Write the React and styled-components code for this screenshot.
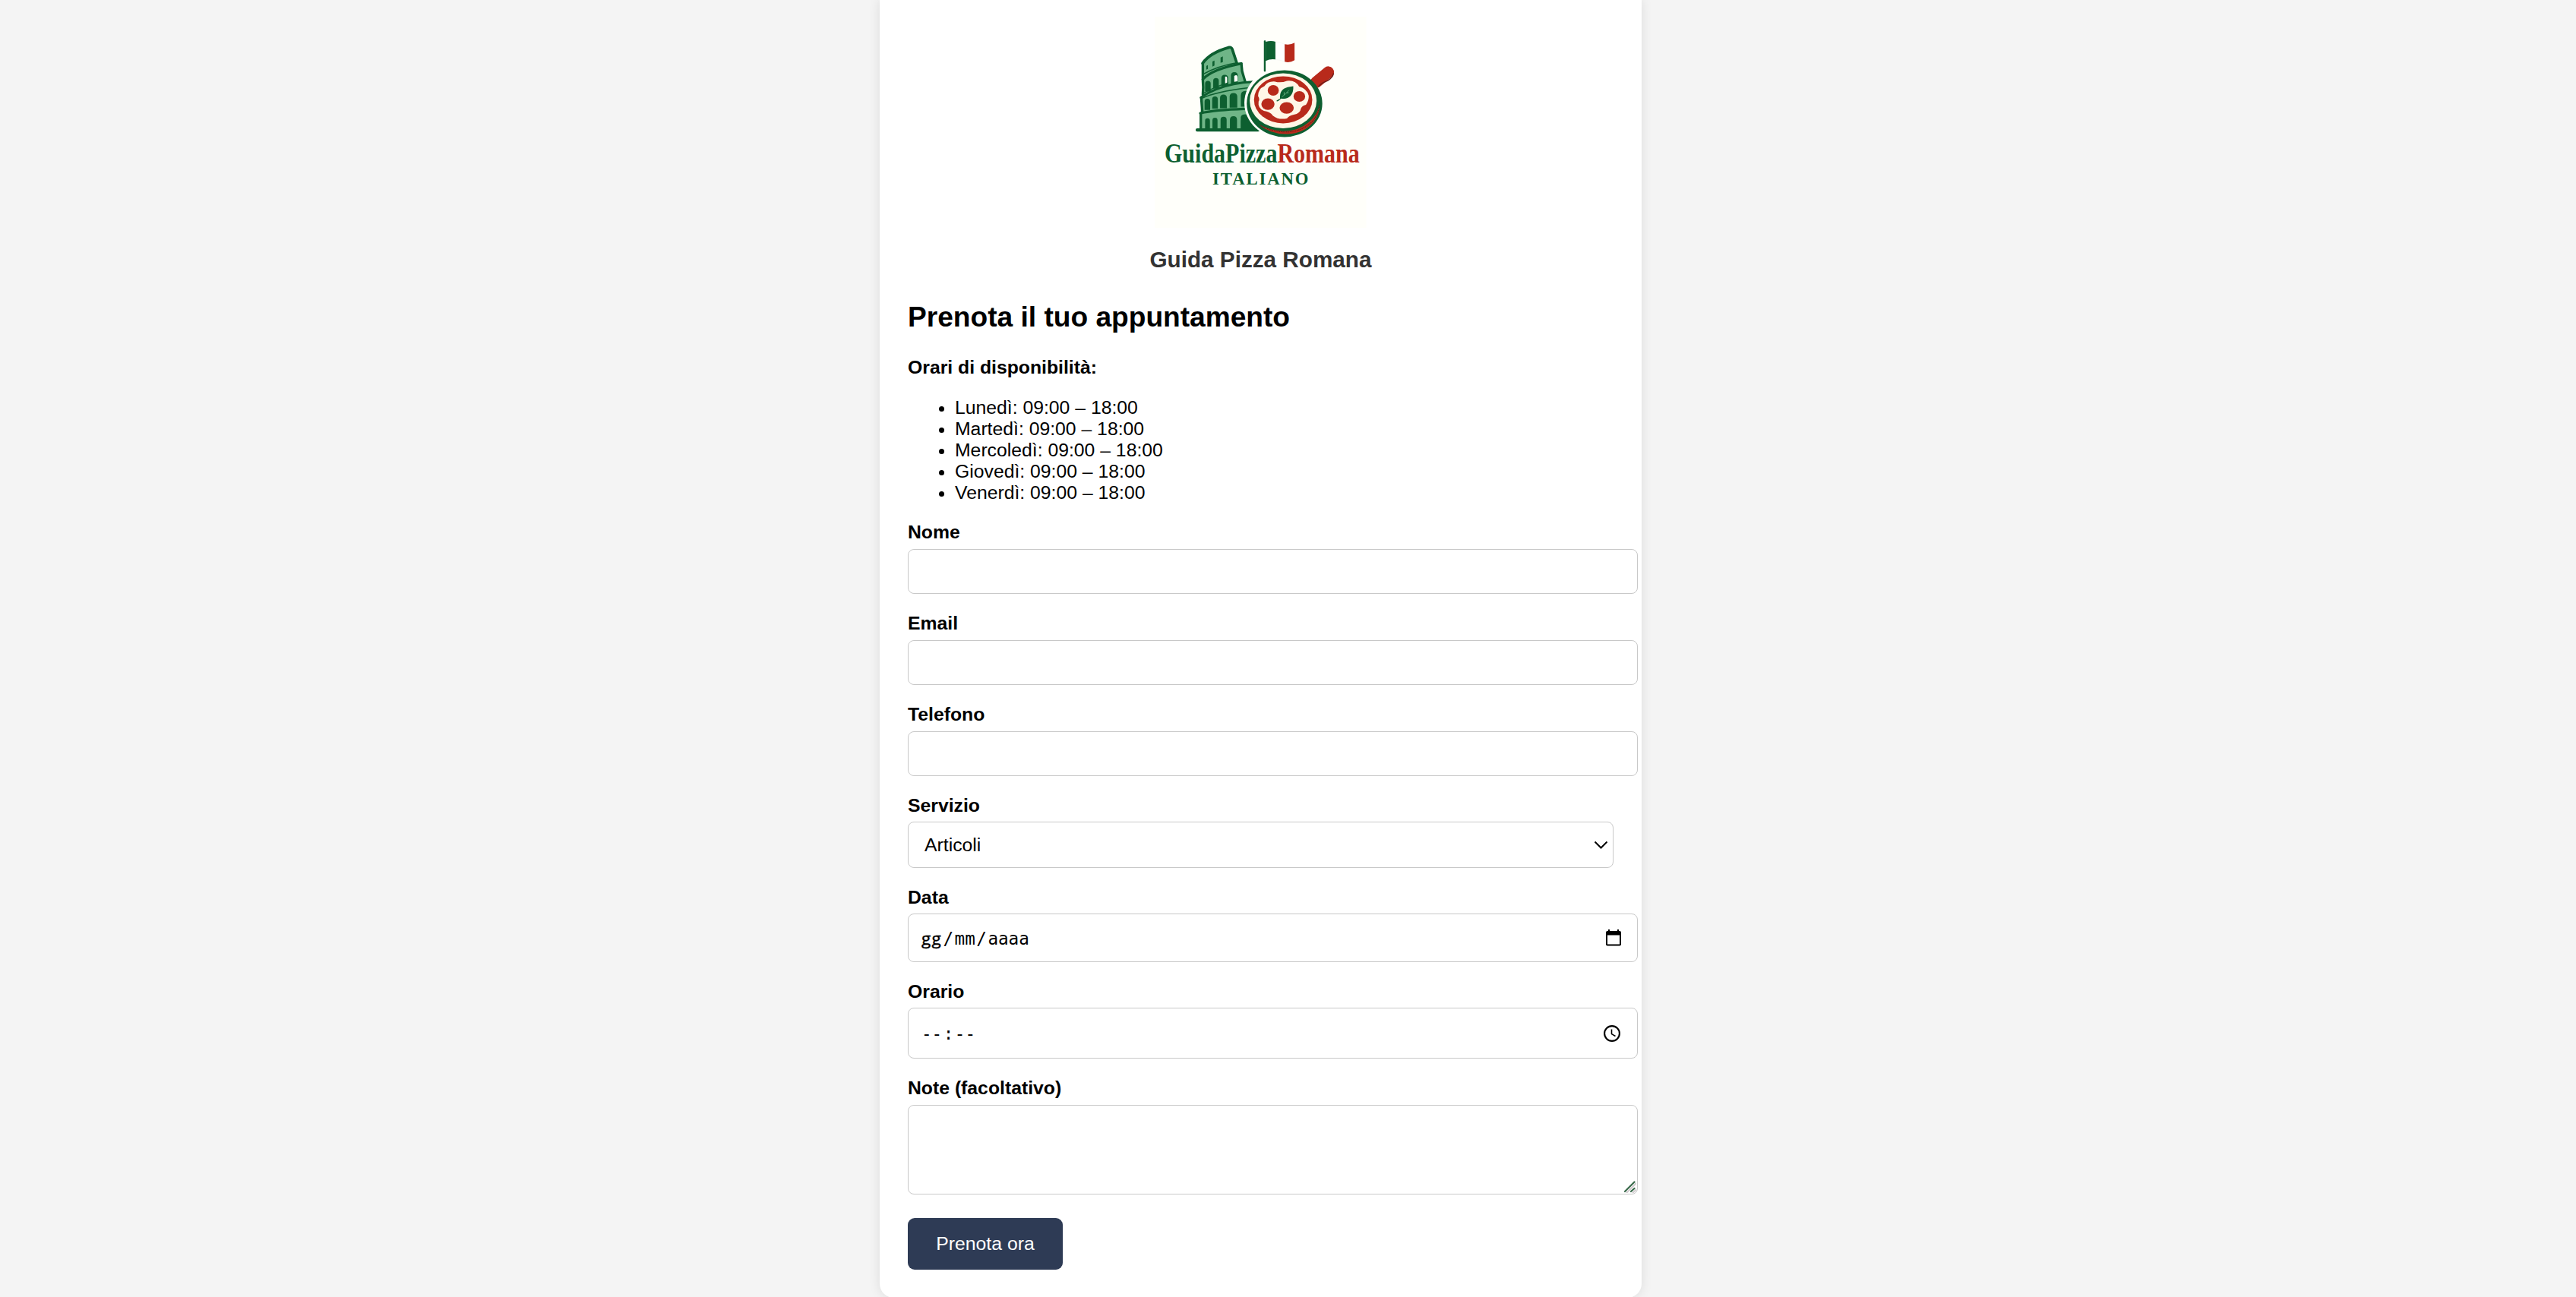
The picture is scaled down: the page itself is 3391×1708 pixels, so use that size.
import React from "react";
import styled, { createGlobalStyle, css } from "styled-components";

const GlobalStyle = createGlobalStyle`
  html, body { margin: 0; background: #f4f4f4; }
  body { font-family: "Liberation Sans", Arial, sans-serif; font-size: 24.75px; line-height: 28px; color: #000; }
`;

const Page = styled.div`
  box-sizing: border-box;
  height: 1708px;
  padding-right: 72px;
  display: flex;
  justify-content: center;
  align-items: flex-start;
  overflow: hidden;
`;

const Panel = styled.main`
  box-sizing: border-box;
  flex: none;
  width: 1003px;
  height: 1709px;
  padding: 21.5px 37px 37px;
  background: #fff;
  border-radius: 0 0 18.5px 18.5px;
  box-shadow: 0 0 15px rgba(0, 0, 0, 0.1);
`;

const Brand = styled.header`
  display: flex;
  flex-direction: column;
  align-items: center;
`;

const LogoArt = styled.svg`
  display: block;
  width: 278.5px;
  height: 278.5px;
`;

const BrandName = styled.div`
  margin-top: 25px;
  font-size: 29.7px;
  line-height: 34px;
  font-weight: 700;
  color: #333;
`;

const Heading = styled.h1`
  margin: 37px 0 32px;
  font-size: 37.12px;
  line-height: 42px;
  font-weight: 700;
`;

const HoursTitle = styled.p`
  margin: 0 0 25px;
  font-weight: 700;
`;

const Hours = styled.ul`
  margin: 0 0 -1px;
  padding-left: 62px;
`;

const Form = styled.form`
  display: flex;
  flex-direction: column;
  align-items: flex-start;
`;

const Field = styled.div`
  display: flex;
  flex-direction: column;
  gap: ${(p) => p.$gap || 8}px;
  margin-top: 24px;
`;

const Label = styled.label`
  padding-top: 1px;
  font-weight: 700;
`;

const control = css`
  box-sizing: border-box;
  margin: 0;
  width: 961px;
  border: 1px solid #c8c8c8;
  border-radius: 8px;
  background: #fff;
  font: inherit;
  color: #000;
  outline: none;
`;

const TextInput = styled.input`
  ${control}
  height: 59px;
  padding: 0 15px;
`;

const PickerBox = styled.div`
  ${control}
  width: ${(p) => p.$width || 961}px;
  height: ${(p) => p.$height}px;
  padding: ${(p) => p.$padding};
  display: flex;
  align-items: center;
  justify-content: space-between;
`;

const Segments = styled.span`
  display: flex;
  padding-top: ${(p) => p.$drop || 0}px;
  font-family: "DejaVu Sans Mono", monospace;
  font-size: 22.6px;
  line-height: 28px;
`;

const Segment = styled.span`
  padding: 0 1.5px 0 0;
  ${(p) =>
    p.$humanist &&
    css`
      font-family: "Open Sans", "Noto Sans", sans-serif;
      letter-spacing: 1.2px;
      -webkit-text-stroke: 0.4px #000;
    `}
`;

const Icon = styled.svg`
  display: block;
  flex: none;
  width: ${(p) => p.$w}px;
  height: ${(p) => p.$h}px;
`;

const NotesBox = styled.div`
  display: grid;
`;

const Notes = styled.textarea`
  ${control}
  grid-area: 1 / 1;
  display: block;
  height: 118px;
  padding: 15px;
  resize: none;
`;

const Grip = styled(Icon)`
  grid-area: 1 / 1;
  place-self: end;
  margin: 0 2px 2px 0;
  pointer-events: none;
`;

const Submit = styled.button`
  margin: 31px 0 0;
  width: 204px;
  height: 68px;
  padding: 0;
  border: 0;
  border-radius: 9px;
  background: #2e3b55;
  color: #fff;
  font: inherit;
`;

const GREEN = "#0d5f30";
const MINT = "#6fb587";
const RED = "#b82a1b";
const CREAM = "#fff6e6";

const arch = (x, y, w, h) =>
  `M${x} ${y}V${y - h + w / 2}Q${x} ${y - h} ${x + w / 2} ${y - h}Q${x + w} ${y - h} ${x + w} ${y - h + w / 2}V${y}Z`;

const ARCHES = [
  [259, 360, 22, 42], [291, 349, 22, 42], [323, 340, 27, 46], [361, 332, 27, 48],
  [257, 433, 22, 44], [287, 428, 22, 48], [318, 426, 27, 54], [356, 424, 30, 58], [400, 420, 36, 62],
  [259, 508, 19, 42], [288, 508, 20, 44], [320, 508, 24, 48], [357, 508, 28, 50], [400, 508, 42, 52],
];

function Logo() {
  return (
    <LogoArt viewBox="60 65 835 835" role="img" aria-label="Guida Pizza Romana">
      <rect x="60" y="65" width="835" height="835" fill="#fffffa" />
      <path
        d="M250 246Q282 203 355 186Q363 184 367 192L384 246H402L404 280L416 322L446 322L468 512H241V450L246 380L252 322Z"
        fill={MINT}
      />
      {ARCHES.map(([x, y, w, h]) => (
        <path key={`${x}-${y}`} d={arch(x, y, w, h)} fill={GREEN} />
      ))}
      <path d="M400 508V462Q400 450 420 450L470 512Z" fill={GREEN} />
      <path d="M338 331V302Q346 298 346 308V328ZM374 322V299Q386 290 387 305V320Z" fill="#fffffa" />
      <path d="M264 259l6-3v15l-6 3zM288 242l8-4v20l-8 4zM320 226l9-4v22l-9 3z" fill={GREEN} />
      <g fill="none" stroke={GREEN} strokeWidth="10" strokeLinecap="round" strokeLinejoin="round">
        <path d="M249 249Q278 207 354 186Q362 184 366 193L384 248" strokeWidth="11" />
        <path d="M250 252V315Q253 345 250 372M244 386L248 440M242 450V508M402 250L405 280L417 321" />
        <path d="M250 312Q288 272 402 250" />
        <path d="M253 291Q310 259 383 247" strokeWidth="5" />
        <path d="M242 384Q296 346 372 331Q408 323 447 322" strokeWidth="9" />
        <path d="M250 369Q298 340 350 326" strokeWidth="4" />
        <path d="M240 446Q300 433 413 429" strokeWidth="10" />
        <path d="M247 387Q300 361 426 346" strokeWidth="4" />
        <path d="M228 512H468" strokeWidth="13" />
      </g>
      <ellipse cx="563" cy="405" rx="149" ry="139" fill="#fffffa" />

      <path d="M491 160Q498 155 498 163V280Q495 284 491 280Z" fill={GREEN} />
      <path d="M498 164Q520 158 537 164V234Q515 231 498 240Z" fill={GREEN} />
      <path d="M537 164Q556 165 573 174V243Q553 234 537 234Z" fill="#fff" stroke="#e9eee8" strokeWidth="1" />
      <path d="M573 174Q596 178 612 168V237Q594 248 573 243Z" fill={RED} />

      <path d="M697 324L745 284" stroke={RED} strokeWidth="46" strokeLinecap="round" fill="none" />
      <path d="M706 341Q718 326 742 318Q763 306 766 288" stroke="#6d1d19" strokeWidth="4" fill="none" />
      <ellipse cx="572.5" cy="408" rx="149" ry="132" fill={GREEN} />
      <path d="M470 490Q520 531 585 528Q650 525 687 480Q710 450 712 412Q703 452 669 481Q628 517 568 517Q514 514 470 490Z" fill={RED} />
      <path d="M478 495Q530 522 585 520Q648 516 684 476Q706 449 711 414" fill="none" stroke="#542018" strokeWidth="3" strokeDasharray="4 3" />
      <ellipse cx="567" cy="397" rx="132" ry="109" fill={CREAM} />
      <ellipse cx="567" cy="393" rx="115" ry="93" fill={RED} />
      <path
        d="M493 339Q506 319 535 321Q558 328 582 318Q616 314 630 341Q661 349 668 377Q669 397 657 413Q642 416 637 428Q635 447 609 452Q591 455 582 467Q548 473 527 456Q514 439 491 437Q466 426 470 400Q476 390 468 378Q468 349 493 339Z"
        fill={CREAM}
      />
      <ellipse cx="528" cy="356" rx="22" ry="21" fill={RED} />
      <ellipse cx="631" cy="380" rx="23" ry="21" fill={RED} />
      <ellipse cx="507" cy="410" rx="26" ry="23" fill={RED} />
      <ellipse cx="581" cy="425" rx="28" ry="23" fill={RED} />
      <path d="M555 388Q551 352 585 343L607 339Q609 379 577 388Q565 390 559 388L548 398Q540 401 541 396Z" fill={GREEN} />
      <path d="M562 382Q578 370 590 355M571 373V363M580 366L589 365" stroke={MINT} strokeWidth="2.5" fill="none" />

      <g fontFamily="'Liberation Serif', 'Times New Roman', serif" fontWeight="700">
        <text x="99" y="641" fontSize="109" textLength="770" lengthAdjust="spacingAndGlyphs" fill={GREEN}>
          GuidaPizza<tspan fill={RED}>Romana</tspan>
        </text>
        <text x="288" y="727" fontSize="68" textLength="379" lengthAdjust="spacing" fill={GREEN}>ITALIANO</text>
      </g>
    </LogoArt>
  );
}

const DAYS = ["Lunedì", "Martedì", "Mercoledì", "Giovedì", "Venerdì"];

export default function App() {
  return (
    <>
      <GlobalStyle />
      <Page>
        <Panel>
          <Brand>
            <Logo />
            <BrandName>Guida Pizza Romana</BrandName>
          </Brand>
          <Heading>Prenota il tuo appuntamento</Heading>
          <HoursTitle>Orari di disponibilità:</HoursTitle>
          <Hours>
            {DAYS.map((day) => (
              <li key={day}>{`${day}: 09:00 – 18:00`}</li>
            ))}
          </Hours>
          <Form>
            <Field>
              <Label htmlFor="nome">Nome</Label>
              <TextInput id="nome" type="text" />
            </Field>
            <Field>
              <Label htmlFor="email">Email</Label>
              <TextInput id="email" type="email" />
            </Field>
            <Field>
              <Label htmlFor="telefono">Telefono</Label>
              <TextInput id="telefono" type="tel" />
            </Field>
            <Field $gap={7}>
              <Label>Servizio</Label>
              <PickerBox $width={929} $height={61} $padding="0 6px 0 21px" role="combobox">
                <span>Articoli</span>
                <Icon $w={19} $h={12} viewBox="0 0 19 12">
                  <path d="M1.5 1.5L9.5 9.5L17.5 1.5" fill="none" stroke="#000" strokeWidth="2" />
                </Icon>
              </PickerBox>
            </Field>
            <Field $gap={7}>
              <Label>Data</Label>
              <PickerBox $height={64} $padding="0 21px 0 17px">
                <Segments $drop={2}>
                  <Segment $humanist>gg</Segment>
                  <Segment>/</Segment>
                  <Segment>mm</Segment>
                  <Segment>/</Segment>
                  <Segment>aaaa</Segment>
                </Segments>
                <Icon $w={20} $h={22} viewBox="0 0 20 22">
                  <path
                    fillRule="evenodd"
                    d="M3 0H5V2H15V0H17V2H18Q20 2 20 4V19.500Q20 21.500 18 21.500H2Q0 21.500 0 19.500V4Q0 2 2 2H3ZM2 7.500V19.500H18V7.500Z"
                  />
                </Icon>
              </PickerBox>
            </Field>
            <Field $gap={7}>
              <Label>Orario</Label>
              <PickerBox $height={67} $padding="0 22px 0 17px">
                <Segments>
                  <Segment>--</Segment>
                  <Segment>:</Segment>
                  <Segment>--</Segment>
                </Segments>
                <Icon $w={22} $h={22} viewBox="0 0 22 22">
                  <circle cx="11" cy="11" r="9.900" fill="none" stroke="#000" strokeWidth="2.100" />
                  <path d="M10.500 5.500V11.600L15.500 14.500" fill="none" stroke="#000" strokeWidth="1.600" />
                </Icon>
              </PickerBox>
            </Field>
            <Field>
              <Label htmlFor="note">Note (facoltativo)</Label>
              <NotesBox>
                <Notes id="note" />
                <Grip $w={16} $h={16} viewBox="0 0 16 16">
                  <path d="M2 15L15 2M10 15L15 10.500" stroke="#d3cdd0" strokeWidth="2" transform="translate(1 1)" />
                  <path d="M1 14L13.500 1.500M9 14L13.500 10" stroke="#3a6b4c" strokeWidth="2.200" strokeLinecap="round" />
                </Grip>
              </NotesBox>
            </Field>
            <Submit type="button">Prenota ora</Submit>
          </Form>
        </Panel>
      </Page>
    </>
  );
}
